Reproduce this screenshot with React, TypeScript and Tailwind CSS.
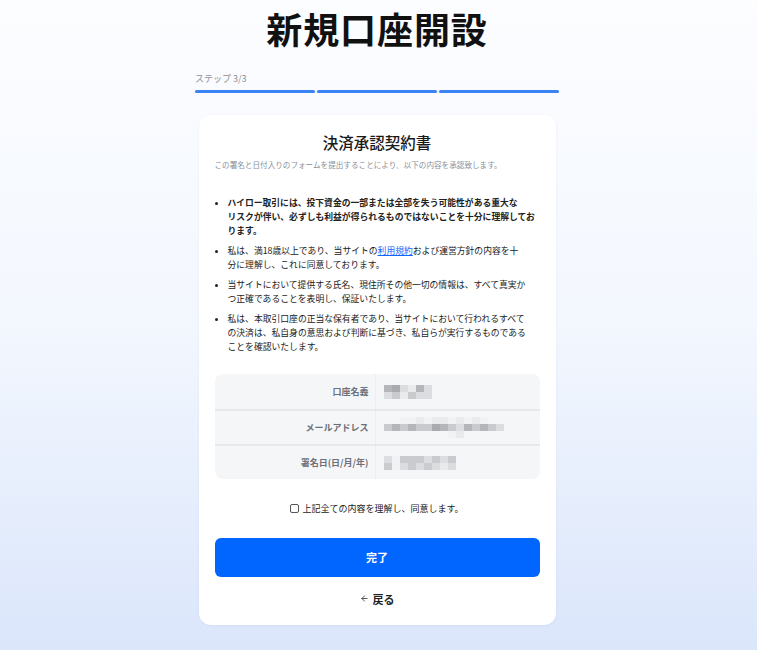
import { ArrowLeft } from "lucide-react";

const font = {
  fontFamily: '"Noto Sans CJK JP", "Noto Sans", sans-serif',
};

// mosaic cells for masked personal data
const tones = [
  "bg-[#b4b6ba]",
  "bg-[#c9cbce]",
  "bg-[#dcdde0]",
  "bg-[#e9eaec]",
  "bg-[#a9abaf]",
  "bg-[#f1f2f3]",
];

function Mosaic({ rows }: { rows: number[][] }) {
  return (
    <div className="flex flex-col">
      {rows.map((row, i) => (
        <div key={i} className="flex">
          {row.map((t, j) => (
            <div
              key={j}
              className={`h-[7px] w-[8px] ${t < 0 ? "bg-transparent" : tones[t]}`}
            />
          ))}
        </div>
      ))}
    </div>
  );
}

const fields = [
  {
    label: "口座名義",
    rows: [
      [0, 4, 2, 3, 0, 2],
      [2, 1, 3, 1, 2, 2],
    ],
  },
  {
    label: "メールアドレス",
    rows: [
      [-1, -1, 5, 5, 3, 5, 3, 3, 5, 3, 5, 3, 5, -1, -1],
      [1, 0, 1, 0, 1, 1, 4, 0, 1, 2, 0, 1, 0, 1, 2],
      [-1, -1, -1, -1, -1, -1, -1, -1, 5, 3, -1, -1, -1, -1, -1],
    ],
  },
  {
    label: "署名日(日/月/年)",
    rows: [
      [2, 5, 1, 1, 1, 2, 1, 2, 1],
      [1, 5, 2, 1, 2, 1, 2, 3, 2],
    ],
  },
];

export default function App() {
  return (
    <div
      style={font}
      className="min-h-[650px] w-full bg-linear-to-b from-[#fcfdff] via-[#f3f7fe] to-[#dbe6fb] pb-6 pr-[3px] text-[#1a1a1a]"
    >
      <div className="mx-auto w-[364px] pt-[10px]">
        <h1 className="text-center text-[36px] font-bold leading-none tracking-wide text-[#111]">
          新規口座開設
        </h1>

        <div className="mt-[28px] text-[9px] leading-none text-[#8a8f98]">
          ステップ 3/3
        </div>
        <div className="mt-[7px] flex gap-[2px]">
          <div className="h-[3px] flex-1 rounded-full bg-[#3b82f6]" />
          <div className="h-[3px] flex-1 rounded-full bg-[#3b82f6]" />
          <div className="h-[3px] flex-1 rounded-full bg-[#3b82f6]" />
        </div>
      </div>

      {/* agreement card */}
      <div className="mx-auto mt-[22px] w-[357px] rounded-[12px] bg-white px-4 pb-[18px] pt-[17px] shadow-[0_1px_3px_rgba(30,60,120,0.06)]">
        <h2 className="text-center text-[15.5px] font-medium leading-[20px]">
          決済承認契約書
        </h2>
        <p className="mt-[7px] whitespace-nowrap text-[7.6px] leading-[12px] text-[#8a8f98]">
          この署名と日付入りのフォームを提出することにより、以下の内容を承認致します。
        </p>

        <ul className="mt-[25px] flex list-disc flex-col gap-[6px] whitespace-nowrap pl-[13px] text-[8.8px] leading-[14px] text-[#222]">
          <li className="font-bold">
            ハイロー取引には、投下資金の一部または全部を失う可能性がある重大な
            <br />
            リスクが伴い、必ずしも利益が得られるものではないことを十分に理解してお
            <br />
            ります。
          </li>
          <li>
            私は、満18歳以上であり、当サイトの
            <a href="#" className="text-[#1463ff] underline">
              利用規約
            </a>
            および運営方針の内容を十
            <br />
            分に理解し、これに同意しております。
          </li>
          <li>
            当サイトにおいて提供する氏名、現住所その他一切の情報は、すべて真実か
            <br />
            つ正確であることを表明し、保証いたします。
          </li>
          <li>
            私は、本取引口座の正当な保有者であり、当サイトにおいて行われるすべて
            <br />
            の決済は、私自身の意思および判断に基づき、私自らが実行するものである
            <br />
            ことを確認いたします。
          </li>
        </ul>

        <div className="mt-[20px] overflow-hidden rounded-[8px] bg-[#f5f6f8]">
          {fields.map((f, i) => (
            <div
              key={f.label}
              className={`flex h-[35px] items-center ${i > 0 ? "border-t-2 border-[#e6e8eb]" : ""}`}
            >
              <div className="w-[157px] pr-[3px] text-right text-[9px] font-semibold text-[#6b7079]">
                {f.label}
              </div>
              <div className="ml-[3px] h-full w-px bg-[#eceef1]" />
              <div className="pl-[8px]">
                <Mosaic rows={f.rows} />
              </div>
            </div>
          ))}
        </div>

        <label className="mt-[23px] flex items-center justify-center gap-[3px] text-[9px] text-[#222]">
          <span className="inline-block h-[9px] w-[9px] rounded-[2px] border border-[#555] bg-white" />
          上記全ての内容を理解し、同意します。
        </label>

        <button className="mt-[22px] flex h-[39px] w-full items-center justify-center rounded-[6px] bg-[#0066ff] text-[11px] font-bold text-white">
          完了
        </button>

        <button className="mx-auto mt-[14px] flex items-center gap-[4px] text-[11px] font-semibold text-[#222]">
          <ArrowLeft className="h-[9px] w-[9px]" strokeWidth={2} />
          戻る
        </button>
      </div>
    </div>
  );
}
